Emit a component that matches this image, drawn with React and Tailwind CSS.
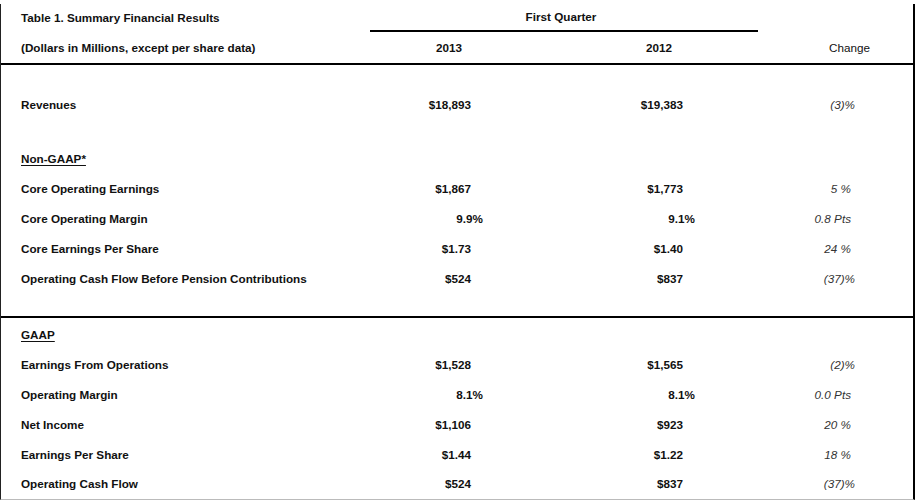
import React from "react";

const font = { fontFamily: '"Liberation Sans", Arial, sans-serif' };

function Row({ label, a, b, c, aPct, bPct, cPad = "pr-[62px]", underline, h = "h-[30px]" }) {
  return (
    <div className={"grid grid-cols-[369px_194px_194px_1fr] items-center " + h}>
      <div className={"pl-[20px] font-bold " + (underline ? "underline underline-offset-2" : "")}>{label}</div>
      <div className={"text-right font-bold " + (aPct ? "pr-[81px]" : "pr-[93px]")}>{a}</div>
      <div className={"text-right font-bold " + (bPct ? "pr-[63px]" : "pr-[75px]")}>{b}</div>
      <div className={"text-right italic text-[#333] " + cPad}>{c}</div>
    </div>
  );
}

export default function App() {
  return (
    <div className="h-[500px] w-[916px] overflow-hidden bg-white pt-[4px] text-[11.7px] leading-none text-[#111]" style={font}>
      <div className="h-[496px] w-[915px] border-l border-r-2 border-b border-l-[#222] border-r-black border-b-[#bbb]">
        {/* header */}
        <div className="border-b-2 border-black">
          <div className="grid h-[28px] grid-cols-[369px_388px_1fr]">
            <div className="flex items-center pl-[20px] font-bold">Table 1. Summary Financial Results</div>
            <div className="flex items-center justify-center border-b-2 border-black pr-[6px] font-bold">First Quarter</div>
            <div />
          </div>
          <div className="grid h-[31px] grid-cols-[369px_194px_194px_1fr] items-center">
            <div className="pl-[20px] font-bold">(Dollars in Millions, except per share data)</div>
            <div className="pl-[66px] font-bold">2013</div>
            <div className="pl-[82px] font-bold">2012</div>
            <div className="pl-[71px]">Change</div>
          </div>
        </div>
        <div className="h-[25px]" />
        <Row label="Revenues" a="$18,893" b="$19,383" c="(3)%" cPad="pr-[58px]" />
        <div className="h-[24px]" />
        <Row label="Non-GAAP*" underline />
        <Row label="Core Operating Earnings" a="$1,867" b="$1,773" c="5 %" />
        <Row label="Core Operating Margin" a="9.9%" aPct b="9.1%" bPct c="0.8 Pts" />
        <Row label="Core Earnings Per Share" a="$1.73" b="$1.40" c="24 %" />
        <Row label="Operating Cash Flow Before Pension Contributions" a="$524" b="$837" c="(37)%" cPad="pr-[58px]" />
        <div className="h-[24px] border-b-2 border-black" />
        <div className="h-[2px]" />
        <Row label="GAAP" underline />
        <Row label="Earnings From Operations" a="$1,528" b="$1,565" c="(2)%" cPad="pr-[58px]" />
        <Row label="Operating Margin" a="8.1%" aPct b="8.1%" bPct c="0.0 Pts" />
        <Row label="Net Income" a="$1,106" b="$923" c="20 %" />
        <Row label="Earnings Per Share" a="$1.44" b="$1.22" c="18 %" />
        <Row label="Operating Cash Flow" a="$524" b="$837" c="(37)%" cPad="pr-[58px]" h="h-[27px]" />
      </div>
    </div>
  );
}
